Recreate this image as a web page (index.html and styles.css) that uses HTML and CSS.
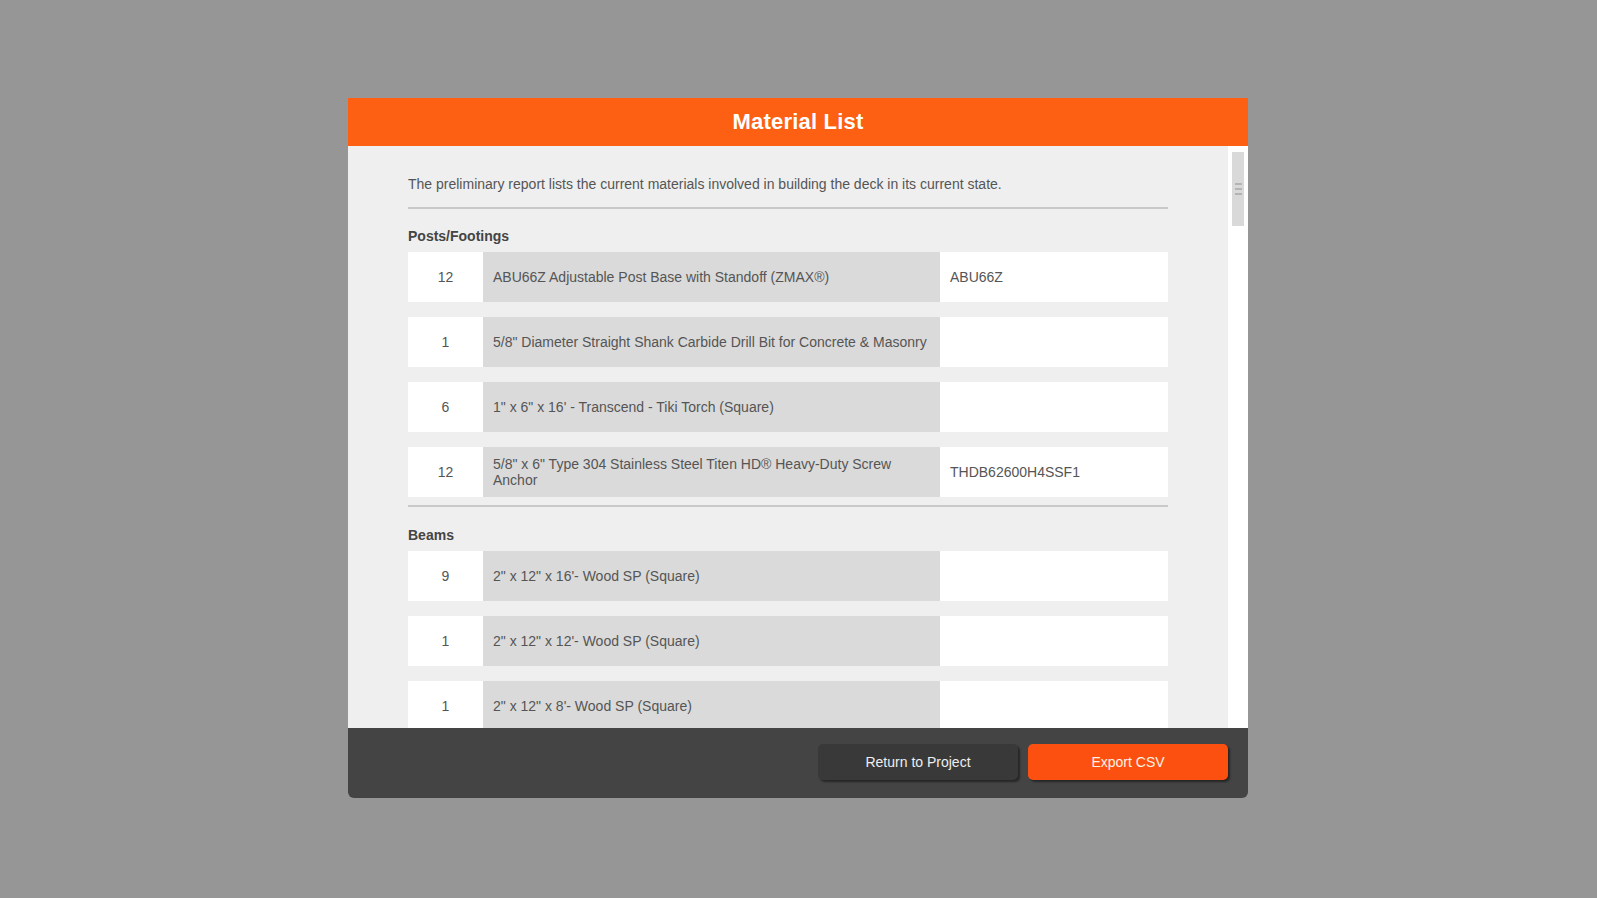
FILE: index.html
```html
<!DOCTYPE html>
<html lang="en">
<head>
<meta charset="utf-8">
<title>Material List</title>
<link rel="stylesheet" href="styles.css">
</head>
<body>
<div class="modal">
  <div class="modal-header">Material List</div>
  <div class="modal-body">
    <div class="content">
      <p class="intro">The preliminary report lists the current materials involved in building the deck in its current state.</p>

      <section class="group">
        <h2 class="group-title">Posts/Footings</h2>
        <div class="rows">
          <div class="row"><div class="qty">12</div><div class="desc">ABU66Z Adjustable Post Base with Standoff (ZMAX®)</div><div class="sku">ABU66Z</div></div>
          <div class="row"><div class="qty">1</div><div class="desc">5/8" Diameter Straight Shank Carbide Drill Bit for Concrete &amp; Masonry</div><div class="sku"></div></div>
          <div class="row"><div class="qty">6</div><div class="desc">1" x 6" x 16' - Transcend - Tiki Torch (Square)</div><div class="sku"></div></div>
          <div class="row"><div class="qty">12</div><div class="desc">5/8" x 6" Type 304 Stainless Steel Titen HD® Heavy-Duty Screw Anchor</div><div class="sku">THDB62600H4SSF1</div></div>
        </div>
      </section>

      <section class="group">
        <h2 class="group-title">Beams</h2>
        <div class="rows">
          <div class="row"><div class="qty">9</div><div class="desc">2" x 12" x 16'- Wood SP (Square)</div><div class="sku"></div></div>
          <div class="row"><div class="qty">1</div><div class="desc">2" x 12" x 12'- Wood SP (Square)</div><div class="sku"></div></div>
          <div class="row"><div class="qty">1</div><div class="desc">2" x 12" x 8'- Wood SP (Square)</div><div class="sku"></div></div>
        </div>
      </section>
    </div>
    <div class="scrollbar">
      <div class="thumb">
        <span class="grip"></span>
        <span class="grip"></span>
        <span class="grip"></span>
      </div>
    </div>
  </div>
  <div class="modal-footer">
    <button class="btn btn-dark" type="button">Return to Project</button>
    <button class="btn btn-orange" type="button">Export CSV</button>
  </div>
</div>
</body>
</html>
```

FILE: styles.css
```css
* {
  box-sizing: border-box;
}

html, body {
  margin: 0;
  padding: 0;
}

body {
  height: 100vh;
  padding: 0 1px 2px 0;
  background: #969696;
  font-family: "Liberation Sans", Arial, Helvetica, sans-serif;
  display: flex;
  align-items: center;
  justify-content: center;
}

.modal {
  width: 900px;
  height: 700px;
  display: flex;
  flex-direction: column;
  border-radius: 0 0 6px 6px;
  overflow: hidden;
}

.modal-header {
  height: 48px;
  flex: none;
  background: #fd5f13;
  color: #ffffff;
  font-size: 22px;
  font-weight: bold;
  display: flex;
  align-items: center;
  justify-content: center;
  letter-spacing: 0.2px;
}

.modal-body {
  flex: 1;
  min-height: 0;
  display: flex;
  background: #efefef;
}

.content {
  flex: 1;
  min-width: 0;
  overflow: hidden;
  padding: 28px 60px 0;
  color: #555555;
}

.intro {
  margin: 0;
  font-size: 14px;
  line-height: 20px;
  padding-bottom: 13px;
  border-bottom: 2px solid #c9c9c9;
}

.group {
  padding-bottom: 8px;
  border-bottom: 2px solid #c9c9c9;
}

.group-title {
  margin: 19px 0 8px;
  font-size: 14px;
  line-height: 16px;
  font-weight: bold;
  color: #444444;
}

.group + .group .group-title {
  margin-top: 20px;
}

.rows {
  display: flex;
  flex-direction: column;
  gap: 15px;
}

.row {
  display: grid;
  grid-template-columns: 75px 457px 228px;
  height: 50px;
  font-size: 14px;
  line-height: 16px;
}

.qty,
.desc,
.sku {
  display: flex;
  align-items: center;
  padding: 0 10px;
}

.qty {
  background: #ffffff;
  justify-content: center;
}

.desc {
  background: #dadada;
}

.sku {
  background: #ffffff;
}

.scrollbar {
  width: 20px;
  flex: none;
  background: #ffffff;
  padding: 6px 4px;
}

.thumb {
  height: 74px;
  background: #d9d9d9;
  display: flex;
  flex-direction: column;
  align-items: center;
  justify-content: center;
  gap: 3px;
}

.grip {
  display: block;
  width: 7px;
  height: 2px;
  background: #b4b4b4;
}

.modal-footer {
  height: 70px;
  flex: none;
  background: #444444;
  display: flex;
  justify-content: flex-end;
  align-items: flex-start;
  gap: 10px;
  padding: 16px 20px 0;
}

.btn {
  width: 200px;
  height: 36px;
  border: none;
  border-radius: 5px;
  font-family: "Liberation Sans", Arial, Helvetica, sans-serif;
  font-size: 14px;
  box-shadow: 2px 2px 2px rgba(0, 0, 0, 0.45);
  cursor: pointer;
}

.btn-dark {
  background: #393939;
  color: #eeeeee;
}

.btn-orange {
  background: #fb5010;
  color: #fff3e6;
}
```
